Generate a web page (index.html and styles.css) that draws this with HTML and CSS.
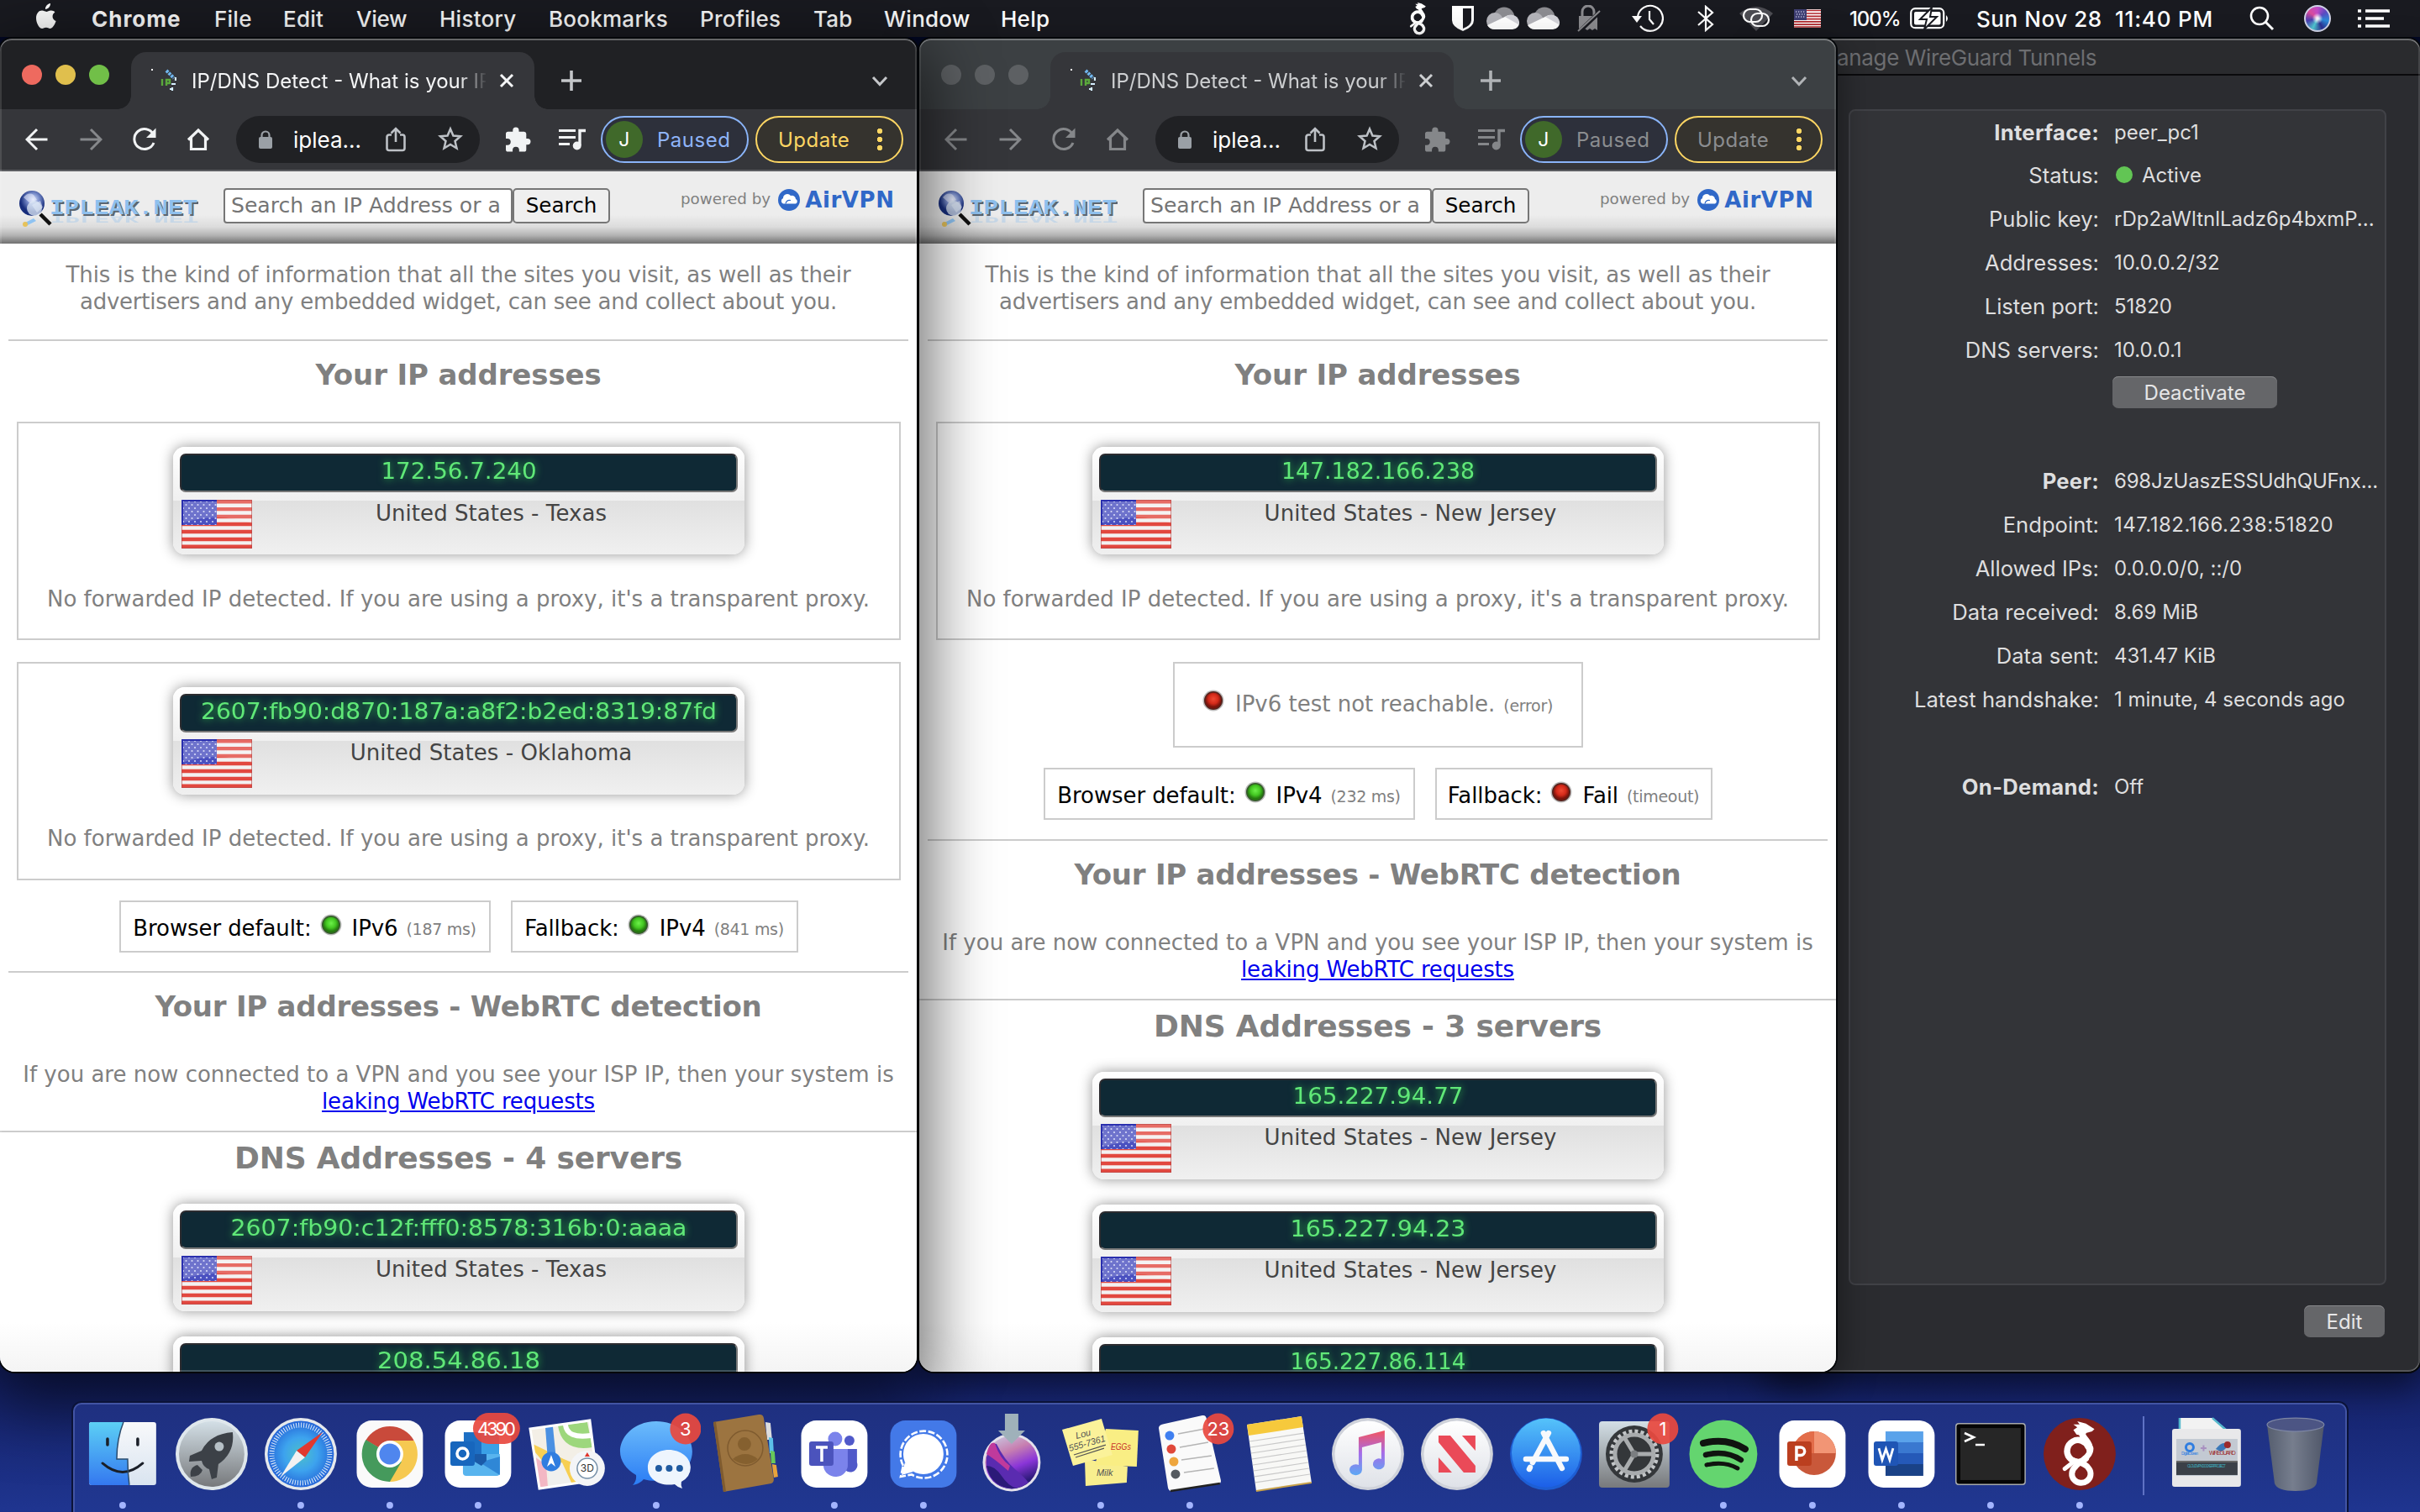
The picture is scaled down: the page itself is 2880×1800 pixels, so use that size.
FILE: index.html
```html
<!DOCTYPE html>
<html lang="en">
<head>
<meta charset="utf-8">
<title>Desktop</title>
<link rel="stylesheet" href="styles.css">
</head>
<body>
<svg class="defs" width="0" height="0" aria-hidden="true">
  <defs>
    <linearGradient id="gGray" x1="0" y1="0" x2="0" y2="1"><stop offset="0" stop-color="#d3dfe6"/><stop offset="1" stop-color="#77797c"/></linearGradient>
    <linearGradient id="gFinder" x1="0" y1="0" x2="0" y2="1"><stop offset="0" stop-color="#5ccff5"/><stop offset="1" stop-color="#3478f0"/></linearGradient>
    <linearGradient id="gFace" x1="0" y1="0" x2="0" y2="1"><stop offset="0" stop-color="#f8f9fb"/><stop offset="1" stop-color="#d9e4f0"/></linearGradient>
    <radialGradient id="gSafari"><stop offset="0" stop-color="#4cc0c8"/><stop offset=".5" stop-color="#3da3ee"/><stop offset="1" stop-color="#2566d8"/></radialGradient>
    <linearGradient id="gMsg" x1="0" y1="0" x2="0" y2="1"><stop offset="0" stop-color="#6cbcfb"/><stop offset="1" stop-color="#2a7cf5"/></linearGradient>
    <linearGradient id="gStore" x1="0" y1="0" x2="0" y2="1"><stop offset="0" stop-color="#55c3fa"/><stop offset="1" stop-color="#1c5fe8"/></linearGradient>
    <linearGradient id="gWhite" x1="0" y1="0" x2="0" y2="1"><stop offset="0" stop-color="#ffffff"/><stop offset="1" stop-color="#dfe2e8"/></linearGradient>
    <linearGradient id="gNote" x1="0" y1="0" x2="0" y2="1"><stop offset="0" stop-color="#f3555f"/><stop offset=".5" stop-color="#a66be8"/><stop offset="1" stop-color="#5ca8f4"/></linearGradient>
    <linearGradient id="gMont" x1="0" y1="0" x2=".4" y2="1"><stop offset="0" stop-color="#c9d4ea"/><stop offset=".4" stop-color="#c77fb0"/><stop offset=".7" stop-color="#8a35d8"/><stop offset="1" stop-color="#2a1a78"/></linearGradient>
    <linearGradient id="gTrash" x1="0" y1="0" x2="1" y2="0"><stop offset="0" stop-color="#5b626c"/><stop offset=".45" stop-color="#80868e"/><stop offset="1" stop-color="#555b66"/></linearGradient>
    <radialGradient id="gGreen" cx=".5" cy=".4"><stop offset="0" stop-color="#6df04a"/><stop offset=".6" stop-color="#43c722"/><stop offset="1" stop-color="#267a10"/></radialGradient>
    <radialGradient id="gRed" cx=".5" cy=".4"><stop offset="0" stop-color="#ef4a34"/><stop offset=".6" stop-color="#d42a1a"/><stop offset="1" stop-color="#7a140c"/></radialGradient>
    <radialGradient id="gGlobe" cx=".55" cy=".35"><stop offset="0" stop-color="#dfe6f8"/><stop offset=".45" stop-color="#7f93cf"/><stop offset="1" stop-color="#182e7c"/></radialGradient>
    <pattern id="stars" width="7" height="8" patternUnits="userSpaceOnUse"><rect width="7" height="8" fill="#4a50c0"/><circle cx="2" cy="2" r="1.1" fill="#cfd3f5"/><circle cx="5.5" cy="6" r="1.1" fill="#cfd3f5"/></pattern>

    <symbol id="flag" viewBox="0 0 84 58">
      <rect width="84" height="58" fill="#f3f1f1"/>
      <path d="M0 2.200h84M0 11.100h84M0 20h84M0 29h84M0 38h84M0 47h84M0 55.800h84" stroke="#e2483f" stroke-width="4.400"/>
      <rect width="42" height="30" fill="url(#stars)"/>
      <path d="M0 0H84V28Q42 14 0 28Z" fill="#fff" opacity=".2"/>
      <rect x=".5" y=".5" width="83" height="57" fill="none" stroke="#b04848" stroke-opacity=".6"/>
      <path d="M1 0V30M0 1H42" stroke="#2a2fae" stroke-width="2"/>
    </symbol>
    <symbol id="ledGreen" viewBox="0 0 26 32"><circle cx="13" cy="16" r="12.500" fill="#bbb"/><circle cx="13" cy="16" r="11" fill="#365a2c"/><circle cx="13" cy="16" r="9.500" fill="url(#gGreen)"/></symbol>
    <symbol id="ledRed" viewBox="0 0 26 32"><circle cx="13" cy="16" r="12.500" fill="#bbb"/><circle cx="13" cy="16" r="11" fill="#55241e"/><circle cx="13" cy="16" r="9.500" fill="url(#gRed)"/></symbol>
    <symbol id="cloudIcon" viewBox="0 0 40 28">
      <circle cx="21" cy="13" r="12.500" fill="#8c8c91"/><circle cx="10" cy="17" r="10" fill="#b4b4ba"/>
      <path d="M10 27a10 10 0 0 1-9-5L26 10l13 8a8 8 0 0 1-8 9z" fill="#fff"/>
      <path d="M26 10a10 10 0 0 1 13 8l-1 3-16-9z" fill="#d4d4da"/>
    </symbol>
    <symbol id="dragon" viewBox="-30 -43 60 86">
      <g fill="none" stroke="currentColor" stroke-linecap="round">
        <path d="M8 7A14 14 0 1 1 11-8" stroke-width="8"/>
        <path d="M-9 9C-2 12 8 12 12 20A12 11.500 0 1 1-6 18C-2 11 14 6 14-6" stroke-width="7.500"/>
        <path d="M13-4C14-16 2-18 3-28" stroke-width="8.500"/>
        <path d="M-10 13L-19 20" stroke-width="5.500"/>
      </g>
      <path d="M-8-30L-3-33-8-37 0-37-3-41 8-38 19-31 16-28 9-26 5-22-4-24Z" fill="currentColor"/>
    </symbol>

    <symbol id="iBack" viewBox="0 0 28 28"><path d="M26.500 14H3M14 2L2 14l12 12" fill="none" stroke="currentColor" stroke-width="3"/></symbol>
    <symbol id="iFwd" viewBox="0 0 28 28"><path d="M1.500 14H25M14 2l12 12-12 12" fill="none" stroke="currentColor" stroke-width="3"/></symbol>
    <symbol id="iReload" viewBox="0 0 28 28"><path d="M24.500 8A12 12 0 1 0 25 18" fill="none" stroke="currentColor" stroke-width="3"/><path d="M27.500 0.500V12H16Z" fill="currentColor"/></symbol>
    <symbol id="iHome" viewBox="0 0 28 28"><path d="M2 14.500L14 3l12 11.500M5.500 12v13.500h17V12" fill="none" stroke="currentColor" stroke-width="3.200"/></symbol>
    <symbol id="iLock" viewBox="0 0 18 22"><rect x="1" y="8" width="16" height="14" rx="2" fill="#9aa0a6"/><path d="M4.500 9V6a4.500 4.500 0 0 1 9 0v3" fill="none" stroke="#9aa0a6" stroke-width="2.200"/></symbol>
    <symbol id="iShare" viewBox="0 0 24 30"><path d="M7 9.500H4A2.500 2.500 0 0 0 1.500 12v13.500A2.500 2.500 0 0 0 4 28h16a2.500 2.500 0 0 0 2.500-2.500V12A2.500 2.500 0 0 0 20 9.500h-3M12 18V3M6.500 7.500L12 2l5.500 5.500" fill="none" stroke="currentColor" stroke-width="2.600"/></symbol>
    <symbol id="iStar" viewBox="0 0 30 30"><path d="M15 3.500l3.400 8 8.600.8-6.500 5.700 2 8.500L15 22l-7.500 4.500 2-8.500L3 12.300l8.600-.8z" fill="none" stroke="currentColor" stroke-width="2.500"/></symbol>
    <symbol id="iPuzzle" viewBox="0 0 29 29"><path d="M25 13.500h-1.500V8A2.600 2.600 0 0 0 21 5.500h-6V4a3.500 3.500 0 0 0-7 0v1.500H2.500A2.500 2.500 0 0 0 0 8v5.500h1.800a3.700 3.700 0 0 1 0 7.500H0v5A2.500 2.500 0 0 0 2.500 28.500h5.300v-1.800a3.700 3.700 0 0 1 7.500 0v1.800H21a2.500 2.500 0 0 0 2.500-2.500V20.500H25a3.500 3.500 0 0 0 0-7z" fill="currentColor"/></symbol>
    <symbol id="iQueue" viewBox="0 0 34 26"><path d="M1 2.500h20M1 10.500h20M1 18.500h13" stroke="currentColor" stroke-width="3.200"/><path d="M26 20V2.500h7" fill="none" stroke="currentColor" stroke-width="3.400"/><circle cx="22.700" cy="20.500" r="5" fill="currentColor"/></symbol>
    <symbol id="iX" viewBox="0 0 18 18"><path d="M2 2l14 14M16 2L2 16" stroke="currentColor" stroke-width="3"/></symbol>
    <symbol id="iPlus" viewBox="0 0 24 24"><path d="M12 0v24M0 12h24" stroke="currentColor" stroke-width="3.600"/></symbol>
    <symbol id="iChev" viewBox="0 0 20 14"><path d="M2 3l8 8.500L18 3" fill="none" stroke="currentColor" stroke-width="3"/></symbol>
    <symbol id="favicon" viewBox="0 0 30 28">
      <rect width="2" height="2" fill="#fff"/>
      <path d="M13 12v8M18 20v-7h4v4h-4" fill="none" stroke="#5aa83c" stroke-width="2.400"/>
      <path d="M18 2l5 5 4 4" fill="none" stroke="#6fb6ee" stroke-width="4" stroke-dasharray="3 1"/>
      <path d="M29 10v4M24 18h5M22 24h4M25 26v-4" stroke="#d6efff" stroke-width="2.200"/>
    </symbol>
    <symbol id="logo" viewBox="0 0 214 46">
      <circle cx="16" cy="15" r="15" fill="url(#gGlobe)"/><path d="M6 8q6-7 12-3l4 6-8 4zM16 17l10-5 3 8-7 6z" fill="#eef2ff" opacity=".55"/>
      <circle cx="19" cy="21" r="9" fill="#dfe9f6" opacity=".75"/><path d="M26 28l12 12" stroke="#111" stroke-width="4.500"/><path d="M6 39l12-6 3 3-12 6z" fill="#8fc3f2"/><circle cx="8" cy="40" r="3" fill="#e6c25a"/>
      <text class="logo-text logo-reflect" transform="translate(38 29) scale(1 -.5)" x="0" y="0" textLength="176" lengthAdjust="spacingAndGlyphs">IPLEAK.NET</text>
      <text class="logo-text logo-shade" x="39" y="29.500" textLength="176" lengthAdjust="spacingAndGlyphs">IPLEAK.NET</text>
      <text class="logo-text" x="37" y="28" textLength="176" lengthAdjust="spacingAndGlyphs">IPLEAK.NET</text>
    </symbol>
    <symbol id="airvpn" viewBox="0 0 26 26"><circle cx="13" cy="13" r="13" fill="#3068c8"/><path d="M6 17.500a3.500 3.500 0 0 1 0-6.500 5 5 0 0 1 9-3 4.500 4.500 0 0 1 6 4 3 3 0 0 1 0 5.500z" fill="#fff"/><path d="M9 17.500q1-5 6-4" fill="none" stroke="#3068c8" stroke-width="1.200"/></symbol>
  </defs>
</svg>

<header class="menubar">
  <span class="m m-apple"><svg width="26" height="32" viewBox="0 0 26 32"><path d="M18 0c.3 3.300-2.700 7-6 7C11.600 3.600 14.900.4 18 0zM23.400 10.400c-4.300 2.800-3.500 8.800 1.200 10.700C23 26 20.200 30 17.600 30c-2 0-2.600-1.200-4.700-1.200-2.200 0-2.900 1.200-4.700 1.200C4.800 30 1 23.500 1 17.500 1 12 4.300 8.600 8 8.600c2.200 0 3.700 1.300 5.200 1.300 1.400 0 3.100-1.500 5.700-1.400 1.800 0 3.400.7 4.500 1.900z" fill="#fff"/></svg></span>
  <span class="m m-app">Chrome</span><span class="m m-file">File</span><span class="m m-edit">Edit</span><span class="m m-view">View</span><span class="m m-history">History</span><span class="m m-bookmarks">Bookmarks</span><span class="m m-profiles">Profiles</span><span class="m m-tab">Tab</span><span class="m m-window">Window</span><span class="m m-help">Help</span>
  <span class="ic w54"><svg width="28" height="40"><use href="#dragon"/></svg></span>
  <span class="ic w52"><svg width="26" height="30" viewBox="0 0 26 30"><path d="M0 0h26v17q0 8-13 13Q0 25 0 17z" fill="#fff"/><path d="M13 3h10v14q0 6-10 10z" fill="#191a20"/></svg></span>
  <span class="ic w44"><svg width="40" height="28"><use href="#cloudIcon"/></svg></span>
  <span class="ic w52"><svg width="40" height="28"><use href="#cloudIcon"/></svg></span>
  <span class="ic w56"><svg width="28" height="32" viewBox="0 0 28 32"><path d="M2 13h22v17l-3-2-3 2-3-2-3 2-3-2-3 2-4-2z" fill="#8a8a8e"/><path d="M6 14V8a7 7 0 0 1 14 0v6" fill="none" stroke="#8a8a8e" stroke-width="3"/><path d="M3 31L27 8" stroke="#191a20" stroke-width="5"/><path d="M1 31L27 7" stroke="#8a8a8e" stroke-width="2"/></svg></span>
  <span class="ic w84"><svg width="38" height="34" viewBox="0 0 38 34"><path d="M7 15a15 15 0 1 1 3 11" fill="none" stroke="#fff" stroke-width="2.200"/><path d="M0 14h12l-6 8z" fill="#fff"/><path d="M21 8v10l5 6" fill="none" stroke="#fff" stroke-width="2.200"/></svg></span>
  <span class="ic w54"><svg width="20" height="32" viewBox="0 0 20 32"><path d="M1 8l17 15-8 7V2l8 7L1 24" fill="none" stroke="#fff" stroke-width="2.200"/></svg></span>
  <span class="ic w66"><svg width="40" height="30" viewBox="0 0 40 30"><path d="M0 9Q20-7 40 9L20 30z" fill="#4c4c52"/><g fill="none" stroke="#fff" stroke-width="2.200"><rect x="5" y="4" width="22" height="15" rx="7.500"/><rect x="14" y="9" width="21" height="15" rx="7.500"/></g></svg></span>
  <span class="ic w56"><svg width="32" height="22" viewBox="0 0 32 22"><rect width="32" height="22" fill="#fff"/><path d="M0 1.500h32M0 5h32M0 8.300h32M0 11.600h32M0 14.900h32M0 18.200h32M0 21h32" stroke="#b3282d" stroke-width="1.700"/><rect width="15" height="13" fill="#3f3f73"/><path d="M2 3h12M3 6h10M2 9h12" stroke="#b9b9d8" stroke-width="1.300" stroke-dasharray="1.300 1.700"/></svg></span>
  <span class="m m-pct">100%</span>
  <span class="ic w72"><svg width="48" height="26" viewBox="0 0 48 26"><rect x="1.200" y="1.200" width="39" height="23" rx="5" fill="none" stroke="#fff" stroke-width="2.200"/><path d="M43 9q4 4 0 8z" fill="#fff"/><rect x="5" y="5" width="31.500" height="15.500" rx="2" fill="#fff"/><path d="M26 0L12 14h8l-3 12L32 11h-8z" fill="#fff" stroke="#191a20" stroke-width="2"/></svg></span>
  <span class="m m-date">Sun Nov 28</span><span class="m m-time">11:40 PM</span>
  <span class="ic w66"><svg width="30" height="30" viewBox="0 0 30 30"><circle cx="12" cy="12" r="10" fill="none" stroke="#fff" stroke-width="2.600"/><path d="M19 19l9 9" stroke="#fff" stroke-width="3"/></svg></span>
  <span class="ic siri"><i></i></span>
  <span class="ic w68"><svg width="38" height="22" viewBox="0 0 38 22"><path d="M0 2h4M0 11h4M0 20h4M9 2h29M9 11h22M9 20h29" stroke="#fff" stroke-width="3.600"/></svg></span>
</header>

<main class="desktop">
  <section class="win wg">
    <div class="wg-title">Manage WireGuard Tunnels</div>
    <div class="wg-group">
      <b>Interface:</b><span>peer_pc1</span>
      <label>Status:</label><span class="wg-status"><i></i>Active</span>
      <label>Public key:</label><span>rDp2aWltnlLadz6p4bxmP...</span>
      <label>Addresses:</label><span>10.0.0.2/32</span>
      <label>Listen port:</label><span>51820</span>
      <label>DNS servers:</label><span>10.0.0.1</span>
      <label></label><span><button class="mac-btn deact">Deactivate</button></span>
      <label></label><span></span>
      <b>Peer:</b><span class="tight">698JzUaszESSUdhQUFnx...</span>
      <label>Endpoint:</label><span class="wide">147.182.166.238:51820</span>
      <label>Allowed IPs:</label><span>0.0.0.0/0, ::/0</span>
      <label>Data received:</label><span>8.69 MiB</span>
      <label>Data sent:</label><span>431.47 KiB</span>
      <label>Latest handshake:</label><span>1 minute, 4 seconds ago</span>
      <label></label><span></span>
      <b>On-Demand:</b><span>Off</span>
    </div>
    <div class="wg-foot"><button class="mac-btn edit">Edit</button></div>
  </section>

  <section class="win chrome right inactive">
    <div class="strip">
      <div class="lights"><i></i><i></i><i></i></div>
      <div class="tab"><svg width="30" height="28"><use href="#favicon"/></svg><span class="tab-title">IP/DNS Detect - What is your IP</span><svg class="x" width="18" height="18"><use href="#iX"/></svg></div>
      <svg class="plus" width="24" height="24"><use href="#iPlus"/></svg>
      <svg class="chev" width="20" height="14"><use href="#iChev"/></svg>
    </div>
    <div class="toolbar">
      <svg width="28" height="28"><use href="#iBack"/></svg><svg width="28" height="28"><use href="#iFwd"/></svg><svg width="28" height="28"><use href="#iReload"/></svg><svg width="28" height="28"><use href="#iHome"/></svg>
      <div class="omni"><svg width="18" height="22"><use href="#iLock"/></svg><span>iplea...</span><svg width="24" height="30"><use href="#iShare"/></svg><svg class="star" width="30" height="30"><use href="#iStar"/></svg></div>
      <svg class="puz" width="30" height="30"><use href="#iPuzzle"/></svg><svg class="queue" width="34" height="26"><use href="#iQueue"/></svg>
      <div class="pill paused"><b>J</b><span>Paused</span></div>
      <div class="pill update"><span>Update</span><i></i></div>
    </div>
    <div class="page">
      <div class="site-head">
        <svg class="logo" width="214" height="46"><use href="#logo"/></svg>
        <div class="query">Search an IP Address or a</div><div class="go">Search</div>
        <div class="powered">powered by</div><svg class="air" width="26" height="26"><use href="#airvpn"/></svg><div class="air-name">AirVPN</div>
      </div>
      <p class="intro">This is the kind of information that all the sites you visit, as well as their<br><span class="l2">advertisers and any embedded widget, can see and collect about you.</span></p>
      <hr>
      <h2>Your IP addresses</h2>
      <div class="box">
        <div class="card"><div class="lcd"><svg width="660" height="42"><text x="330" y="27.500" text-anchor="middle" textLength="230" lengthAdjust="spacingAndGlyphs">147.182.166.238</text></svg></div><div class="where"><svg width="84" height="58"><use href="#flag"/></svg><span>United States - New Jersey</span></div></div>
        <p>No forwarded IP detected. If you are using a proxy, it's a transparent proxy.</p>
      </div>
      <div class="box failed"><svg width="26" height="32"><use href="#ledRed"/></svg><span>IPv6 test not reachable.</span><small>(error)</small></div>
      <div class="stats">
        <div class="stat s442"><span>Browser default:</span><svg width="26" height="32"><use href="#ledGreen"/></svg><span>IPv4</span><small>(232 ms)</small></div>
        <div class="stat s330"><span>Fallback:</span><svg width="26" height="32"><use href="#ledRed"/></svg><span>Fail</span><small>(timeout)</small></div>
      </div>
      <hr class="after-stats">
      <h2 class="tight">Your IP addresses - WebRTC detection</h2>
      <p class="rtc">If you are now connected to a VPN and you see your ISP IP, then your system is<br><a href="#">leaking WebRTC requests</a></p>
      <hr class="full">
      <h1>DNS Addresses - 3 servers</h1>
      <div class="cards">
        <div class="card"><div class="lcd"><svg width="660" height="42"><text x="330" y="27.500" text-anchor="middle" textLength="203" lengthAdjust="spacingAndGlyphs">165.227.94.77</text></svg></div><div class="where"><svg width="84" height="58"><use href="#flag"/></svg><span>United States - New Jersey</span></div></div>
        <div class="card"><div class="lcd"><svg width="660" height="42"><text x="330" y="27.500" text-anchor="middle" textLength="209" lengthAdjust="spacingAndGlyphs">165.227.94.23</text></svg></div><div class="where"><svg width="84" height="58"><use href="#flag"/></svg><span>United States - New Jersey</span></div></div>
        <div class="card"><div class="lcd"><svg width="660" height="42"><text x="330" y="27.500" text-anchor="middle" textLength="209" lengthAdjust="spacingAndGlyphs">165.227.86.114</text></svg></div></div>
      </div>
    </div>
  </section>

  <section class="win chrome left">
    <div class="strip">
      <div class="lights"><i></i><i></i><i></i></div>
      <div class="tab"><svg width="30" height="28"><use href="#favicon"/></svg><span class="tab-title">IP/DNS Detect - What is your IP</span><svg class="x" width="18" height="18"><use href="#iX"/></svg></div>
      <svg class="plus" width="24" height="24"><use href="#iPlus"/></svg>
      <svg class="chev" width="20" height="14"><use href="#iChev"/></svg>
    </div>
    <div class="toolbar">
      <svg width="28" height="28"><use href="#iBack"/></svg><svg class="dim" width="28" height="28"><use href="#iFwd"/></svg><svg width="28" height="28"><use href="#iReload"/></svg><svg width="28" height="28"><use href="#iHome"/></svg>
      <div class="omni"><svg width="18" height="22"><use href="#iLock"/></svg><span>iplea...</span><svg width="24" height="30"><use href="#iShare"/></svg><svg class="star" width="30" height="30"><use href="#iStar"/></svg></div>
      <svg class="puz" width="30" height="30"><use href="#iPuzzle"/></svg><svg class="queue" width="34" height="26"><use href="#iQueue"/></svg>
      <div class="pill paused"><b>J</b><span>Paused</span></div>
      <div class="pill update"><span>Update</span><i></i></div>
    </div>
    <div class="page">
      <div class="site-head">
        <svg class="logo" width="214" height="46"><use href="#logo"/></svg>
        <div class="query">Search an IP Address or a</div><div class="go">Search</div>
        <div class="powered">powered by</div><svg class="air" width="26" height="26"><use href="#airvpn"/></svg><div class="air-name">AirVPN</div>
      </div>
      <p class="intro">This is the kind of information that all the sites you visit, as well as their<br><span class="l2">advertisers and any embedded widget, can see and collect about you.</span></p>
      <hr>
      <h2>Your IP addresses</h2>
      <div class="box">
        <div class="card"><div class="lcd"><svg width="660" height="42"><text x="330" y="27.500" text-anchor="middle" textLength="185" lengthAdjust="spacingAndGlyphs">172.56.7.240</text></svg></div><div class="where"><svg width="84" height="58"><use href="#flag"/></svg><span>United States - Texas</span></div></div>
        <p>No forwarded IP detected. If you are using a proxy, it's a transparent proxy.</p>
      </div>
      <div class="box">
        <div class="card"><div class="lcd"><svg width="660" height="42"><text x="330" y="27.500" text-anchor="middle" textLength="614" lengthAdjust="spacingAndGlyphs">2607:fb90:d870:187a:a8f2:b2ed:8319:87fd</text></svg></div><div class="where"><svg width="84" height="58"><use href="#flag"/></svg><span>United States - Oklahoma</span></div></div>
        <p>No forwarded IP detected. If you are using a proxy, it's a transparent proxy.</p>
      </div>
      <div class="stats">
        <div class="stat s442"><span>Browser default:</span><svg width="26" height="32"><use href="#ledGreen"/></svg><span>IPv6</span><small>(187 ms)</small></div>
        <div class="stat s342"><span>Fallback:</span><svg width="26" height="32"><use href="#ledGreen"/></svg><span>IPv4</span><small>(841 ms)</small></div>
      </div>
      <hr class="after-stats">
      <h2 class="tight">Your IP addresses - WebRTC detection</h2>
      <p class="rtc">If you are now connected to a VPN and you see your ISP IP, then your system is<br><a href="#">leaking WebRTC requests</a></p>
      <hr class="full">
      <h1>DNS Addresses - 4 servers</h1>
      <div class="cards">
        <div class="card"><div class="lcd"><svg width="660" height="42"><text x="330" y="27.500" text-anchor="middle" textLength="543" lengthAdjust="spacingAndGlyphs">2607:fb90:c12f:fff0:8578:316b:0:aaaa</text></svg></div><div class="where"><svg width="84" height="58"><use href="#flag"/></svg><span>United States - Texas</span></div></div>
        <div class="card"><div class="lcd"><svg width="660" height="42"><text x="330" y="27.500" text-anchor="middle" textLength="194" lengthAdjust="spacingAndGlyphs">208.54.86.18</text></svg></div></div>
      </div>
    </div>
  </section>

  <nav class="dock">
    <!-- Finder -->
    <svg class="app" viewBox="-53 -61 106 130"><rect x="-40" y="-38" width="80" height="75" rx="3" fill="url(#gFace)"/><path d="M1-38H-37a3 3 0 0 0-3 3V34a3 3 0 0 0 3 3H8Q6 22 6 6H-7Q-7-18 1-38Z" fill="url(#gFinder)"/><path d="M-18-18v7M18-18v7" stroke="#1a1f28" stroke-width="3.500" stroke-linecap="round"/><path d="M-24 11Q0 32 24 11" fill="none" stroke="#1a1f28" stroke-width="3" stroke-linecap="round"/><path d="M1-38Q-7-18-7 6H6Q6 22 8 37" fill="none" stroke="#2b4c6e" stroke-width="1.500"/><circle cy="61" r="4" class="run"/></svg>
    <!-- Launchpad -->
    <svg class="app" viewBox="-53 -61 106 130"><circle r="43" fill="#dfe7ec"/><circle r="39" fill="url(#gGray)"/><path d="M25-26Q-2-24-12-4L-26 2-27 9-12 8Q-10 16-3 18L0 30 6 28 8 12Q28-2 25-26Z" fill="#3c4147"/><circle cx="9" cy="-9" r="5.500" fill="#b6c0c6"/><path d="M-17 13q-10 3-8 14 12 0 14-8z" fill="#3c4147"/></svg>
    <!-- Safari -->
    <svg class="app" viewBox="-53 -61 106 130"><circle r="43" fill="#e6e9ec"/><circle r="39.500" fill="url(#gSafari)"/><circle r="34.500" fill="none" stroke="#fff" stroke-width="6" stroke-dasharray="1 2.010" opacity=".85"/><path d="M26-26L-5-4 5 4Z" fill="#e2382e"/><path d="M-24 27L-5-4 5 4Z" fill="#f2f2f2"/><circle cy="61" r="4" class="run"/></svg>
    <!-- Chrome -->
    <svg class="app" viewBox="-53 -61 106 130"><rect x="-39.500" y="-40" width="79" height="80" rx="18" fill="#fafafa"/><path d="M0 0L-28.600-16.500A33 33 0 0 1 28.600-16.500Z" fill="#c94a3b"/><path d="M0 0L0-16H28.900A33 33 0 0 1-1 33L14 8Z" fill="#f6c951"/><path d="M0 0L-28.600-17A33 33 0 0 0 0 33L14 9Z" fill="#459a5c"/><circle r="16" fill="#fff"/><circle r="12.500" fill="#4f86ee"/><circle cy="61" r="4" class="run"/></svg>
    <!-- Outlook -->
    <svg class="app" viewBox="-53 -61 106 130"><rect x="-39.500" y="-40" width="79" height="80" rx="18" fill="#fff"/><rect x="-17" y="-26" width="42" height="50" fill="#1d6fc4"/><path d="M4-26h21V0H4z" fill="#3aa0e6"/><path d="M-18 0H26V22a4 4 0 0 1-4 4H-14a4 4 0 0 1-4-4z" fill="#58b4ee"/><path d="M26 3v22L2 10z" fill="#2f87d6"/><path d="M-4 0h14v8L4 14-6 8z" fill="#1a5aa8"/><rect x="-33" y="-15" width="29" height="29" rx="3" fill="#1766bd"/><circle cx="-18.500" cy="-.5" r="6.500" fill="none" stroke="#fff" stroke-width="3.500"/><rect x="-6" y="-49" width="56" height="37" rx="18.500" class="badge"/><text x="22" y="-22.500" class="badge-t" textLength="46">4390</text><circle cy="61" r="4" class="run"/></svg>
    <!-- Maps -->
    <svg class="app" viewBox="-53 -61 106 130"><path d="M-44-30L27-40 36 31-33 41Z" fill="#f3efe6"/><path d="M-11-34L24-38 30-8Q-6-2-11-34Z" fill="#9dd77c"/><path d="M-2-35Q0-18 28-22" fill="none" stroke="#fff" stroke-width="6"/><path d="M-41-12L-4 6 34 22 35 30-6 36-38-2Z" fill="#f7cf52"/><path d="M-39 3l14 10 2 26-10 1z" fill="#f3b7c4"/><path d="M-22 40V14l16-4 12 26z" fill="#f0f0ee"/><path d="M-26-32l9-1 4 40h-10z" fill="#4a90e2"/><circle cx="-19" cy="9" r="11.500" fill="#2f7de0"/><path d="M-19 1l5 14-5-4-5 4z" fill="#fff"/><path d="M-44-30L27-40 36 31-33 41Z" fill="none" stroke="#fff" stroke-width="3"/><circle cx="24" cy="17" r="21" fill="#f4f5f7"/><circle cx="24" cy="17" r="12" fill="#fff" stroke="#7690a8" stroke-width="1.500"/><path d="M24-2l3 5h-6z" fill="#e0352b"/><text x="24" y="21" class="small-t">3D</text></svg>
    <!-- Messages -->
    <svg class="app" viewBox="-53 -61 106 130"><path d="M0-39C24-39 43-23 43-3S24 32 0 32Q-9 32-15 30-20 36-28 37-23 32-24 25C-36 18-43 8-43-3-43-23-24-39 0-39Z" fill="url(#gMsg)"/><path d="M15-5C29-5 41 4 41 16Q41 27 30 33 29 37 31 41 26 40 22 36C4 39-10 30-10 16-10 4 1-5 15-5Z" fill="#eef5fd"/><g fill="#1f5aa0"><circle cx="3" cy="17" r="4"/><circle cx="15.500" cy="17" r="4"/><circle cx="28" cy="17" r="4"/></g><circle cx="35" cy="-30" r="18.500" class="badge"/><text x="35" y="-22.500" class="badge-t">3</text><circle cy="61" r="4" class="run"/></svg>
    <!-- Contacts -->
    <svg class="app" viewBox="-53 -61 106 130"><path d="M24-38l6 1 2 20h-6z" fill="#ddd"/><path d="M28-20l5 1 1 18h-5z" fill="#5cc0e8"/><path d="M30-4l5 1 1 14h-5z" fill="#68c95a"/><path d="M32 12l5 1 2 14-5 1z" fill="#e8a33c"/><path d="M-38-38L16-47q5-1 6 4L34 30q0 4-3 5L-26 45Z" fill="#9c7440"/><path d="M-38-38L-35-38.500-23 44.500-26 45Z" fill="#7f5b2f"/><circle cx="0" cy="-7" r="21" fill="none" stroke="#7f5b2f" stroke-width="1.500"/><circle cx="-1" cy="-12" r="8" fill="#85602f"/><path d="M-15 6Q0-6 15 6 2 18-15 6Z" fill="#85602f"/></svg>
    <!-- Teams -->
    <svg class="app" viewBox="-53 -61 106 130"><rect x="-39.500" y="-40" width="79" height="80" rx="18" fill="#fff"/><circle cx="18" cy="-16" r="6" fill="#5059c9"/><path d="M10-6H27V10a8 8 0 0 1-16 6z" fill="#5059c9"/><circle cx="1" cy="-18" r="8.500" fill="#7b83eb"/><path d="M-14-6H16V12a14.500 14 0 0 1-29 2z" fill="#7b83eb"/><rect x="-30" y="-15" width="29" height="29" rx="3" fill="#4b53bc"/><path d="M-22-8h14M-15-8V9" stroke="#fff" stroke-width="3.500"/><circle cy="61" r="4" class="run"/></svg>
    <!-- Signal -->
    <svg class="app" viewBox="-53 -61 106 130"><rect x="-39.500" y="-40" width="79" height="80" rx="18" fill="#4379e8"/><circle r="24" fill="#fff"/><path d="M-22 10L-26 25-12 21Z" fill="#fff"/><path d="M-24 14A28 28 0 1 1-14 24.500L-27 27Z" fill="none" stroke="#fff" stroke-width="2.600" stroke-dasharray="8 2.500"/><circle cy="61" r="4" class="run"/></svg>
    <!-- macOS installer -->
    <svg class="app" viewBox="-53 -61 106 130"><circle cy="10" r="34.500" fill="#e4e2ec"/><circle cy="10" r="31.500" fill="url(#gMont)"/><path d="M-30 4Q-24-14-18-12-8 8 4 18T20 34Q4 46-14 38-32 28-30 4Z" fill="#5a2bb0"/><path d="M-30 14Q-20 14-12 26T6 41Q-24 42-30 14Z" fill="#2b1a78"/><path d="M-30 0Q-26-16-20-13-14 6-2 14L-4 20Q-20 6-30 0Z" fill="#c03a9c"/><path d="M-8-48H8V-28H16L0-12-16-28H-8Z" fill="#9fb1ba"/></svg>
    <!-- Stickies -->
    <svg class="app" viewBox="-53 -61 106 130"><path d="M-19 6L32 15 31 34-18 38Z" fill="#f8ee8e"/><path d="M6-30L45-28 43 15-7 13Z" fill="#f9ee84"/><path d="M-46-29L1-42 14 1-33 14Z" fill="#fbf29a"/><g class="hand"><text x="-29" y="-18" transform="rotate(-14 -29 -18)">Lou</text><text x="-37" y="-3" transform="rotate(-16 -37 -3)" textLength="45" lengthAdjust="spacingAndGlyphs">555-7361</text><text x="12" y="-5" class="redhand" textLength="24" lengthAdjust="spacingAndGlyphs">EGGs</text><text x="-5" y="26">Milk</text></g><path d="M-32 1L6-11M-30 4L4-7" stroke="#555" stroke-width="1.300"/><circle cy="61" r="4" class="run"/></svg>
    <!-- Reminders -->
    <svg class="app" viewBox="-53 -61 106 130"><path d="M-30-36L15-46q4-1 5 4L37 31q1 4-4 5L-20 44q-5 1-6-4L-37-31q0-4 7-5Z" fill="#fafafa"/><path d="M-23 44L36 35" stroke="#222" stroke-width="2.500"/><g><circle cx="-24" cy="-22" r="5.500" fill="#3f7ff0"/><circle cx="-22" cy="-6" r="5.500" fill="#e0483a"/><circle cx="-19" cy="9" r="5.500" fill="#eea63e"/><circle cx="-17" cy="24" r="5.500" fill="#555a60"/></g><path d="M-14-24L18-30M-12-8L22-14M-10 7L26 2M-7 22L29 17" stroke="#b5b5b5" stroke-width="1.500"/><circle cx="34" cy="-30" r="18.500" class="badge"/><text x="34" y="-22.500" class="badge-t">23</text><circle cy="61" r="4" class="run"/></svg>
    <!-- Notes -->
    <svg class="app" viewBox="-53 -61 106 130"><path d="M-38-35L27-45 39 34-27 44Z" fill="#f8f8f6"/><path d="M-38-35L27-45 29-32-36-22Z" fill="#f6c93c"/><path d="M-35-15L30-25M-34-8L31-18M-33-1L32-11M-32 6L33-4M-31 13L34 3M-30 20L35 10M-29 27L36 17M-28 34L37 24" stroke="#c9c9c9" stroke-width="1.200"/><path d="M-27 44L39 34" stroke="#c8a24a" stroke-width="2"/></svg>
    <!-- Music -->
    <svg class="app" viewBox="-53 -61 106 130"><circle r="43" fill="#cfd2da"/><circle r="39.500" fill="url(#gWhite)"/><path d="M-11-20L20-28V12a7 6.500 0 1 1-4-6V-14L-7-8V19a7.500 6.500 0 1 1-4-6Z" fill="url(#gNote)"/></svg>
    <!-- News -->
    <svg class="app" viewBox="-53 -61 106 130"><circle r="43" fill="#cfd2da"/><circle r="39.500" fill="url(#gWhite)"/><path d="M-22-22H-8L22 14V22H8L-22-14ZM6-22H22V-4ZM-22 4V22H-6Z" fill="#ea4a58"/></svg>
    <!-- App Store -->
    <svg class="app" viewBox="-53 -61 106 130"><circle r="43" fill="#1d5ed4"/><circle cy="-1.500" r="41" fill="url(#gStore)"/><g stroke="#f7f9fc" stroke-width="6.500" stroke-linecap="round"><path d="M-3-25L19 17M3-25L-16 10M-24 6H24M-19 16l-1 2"/></g></svg>
    <!-- System Preferences -->
    <svg class="app" viewBox="-53 -61 106 130"><rect x="-42" y="-39" width="84" height="79" rx="4" fill="url(#gGray)"/><circle r="34" fill="#34373a"/><circle r="27" fill="none" stroke="#c2c5c7" stroke-width="5" stroke-dasharray="4 3.070"/><circle r="23" fill="none" stroke="#a9acae" stroke-width="5"/><path d="M0 0L23 0M0 0L-12 20M0 0L-12-20" stroke="#a9acae" stroke-width="5"/><circle r="4.500" fill="#7b7e81"/><circle cx="34" cy="-30" r="18.500" class="badge"/><text x="34" y="-22.500" class="badge-t">1</text></svg>
    <!-- Spotify -->
    <svg class="app" viewBox="-53 -61 106 130"><circle r="40.500" fill="#64d56f"/><g fill="none" stroke="#101410" stroke-linecap="round"><path d="M-24-13Q4-20 26-6" stroke-width="8"/><path d="M-21 1Q3-5 21 7" stroke-width="6.500"/><path d="M-20 13Q1 8 17 17" stroke-width="5"/></g><circle cy="61" r="4" class="run"/></svg>
    <!-- PowerPoint -->
    <svg class="app" viewBox="-53 -61 106 130"><rect x="-39.500" y="-40" width="79" height="80" rx="18" fill="#fff"/><circle cx="2" cy="-1" r="26" fill="#c9583a"/><path d="M2-27A26 26 0 0 1 28-1H2Z" fill="#f29575"/><path d="M2-27V-1H-24A26 26 0 0 1 2-27Z" fill="#e36d4a"/><rect x="-30" y="-15" width="29" height="29" rx="3" fill="#bb3f1f"/><path d="M-19 8V-8h5a4.500 4.500 0 0 1 0 9.500h-5" fill="none" stroke="#fff" stroke-width="3.500"/><circle cy="61" r="4" class="run"/></svg>
    <!-- Word -->
    <svg class="app" viewBox="-53 -61 106 130"><rect x="-39.500" y="-40" width="79" height="80" rx="18" fill="#fff"/><rect x="-19" y="-27" width="45" height="14" fill="#5aa2ea"/><rect x="-19" y="-14" width="45" height="13" fill="#3a78d0"/><rect x="-19" y="-1" width="45" height="13" fill="#2559b8"/><rect x="-19" y="12" width="45" height="14" fill="#1a4287"/><rect x="-33" y="-15" width="29" height="29" rx="3" fill="#1f55b5"/><path d="M-27-7l4 14 4.500-13 4.500 13 4-14" fill="none" stroke="#fff" stroke-width="2.800"/><circle cy="61" r="4" class="run"/></svg>
    <!-- Terminal -->
    <svg class="app" viewBox="-53 -61 106 130"><rect x="-42" y="-37" width="84" height="74" rx="4" fill="#a6a9ac"/><rect x="-40.500" y="-35.500" width="81" height="71" rx="3" fill="#050505"/><rect x="-36" y="-31" width="72" height="62" fill="#262626"/><path d="M-31-25l11 5-11 5M-18-11h11" fill="none" stroke="#fff" stroke-width="2.600"/><circle cy="61" r="4" class="run"/></svg>
    <!-- WireGuard -->
    <svg class="app drag" viewBox="-53 -61 106 130"><circle r="43" fill="#80201c"/><use href="#dragon" x="-30" y="-41" width="60" height="80"/><circle cy="61" r="4" class="run"/></svg>
    <i class="sep"></i>
    <!-- Document stack -->
    <svg class="app" viewBox="-53 -61 106 130"><path d="M-32-43H7l16 14V0H-32z" fill="#f2f2f2"/><path d="M-32-43v18M7-43l16 14" stroke="#55b8cc" stroke-width="2.500"/><rect x="-41" y="-30" width="82" height="69" rx="3" fill="#e8e8ea"/><rect x="-36" y="-18" width="73" height="44" fill="#c3c9d2"/><rect x="-36" y="9" width="73" height="16" fill="#3b4048"/><rect x="-36" y="8" width="73" height="2" fill="#666"/><circle cx="-20" cy="-8" r="4.500" fill="none" stroke="#2f7de0" stroke-width="3"/><path d="M-7-7h7M-3.500-10.500v7" stroke="#a890c0" stroke-width="2"/><path d="M11-6q8-10 12-6 3 6-6 9z" fill="#3a78b8"/><circle cx="25" cy="-11" r="4" fill="#9c2a2a"/><text x="-20" y="1" class="tiny" textLength="20">DigitalOcean</text><text x="19" y="1" class="tiny redhand" textLength="32">WIREGUARD</text><text x="0" y="16" class="tiny teal" textLength="46">CLOUD VPN DOCKER PROJECT</text></svg>
    <!-- Trash -->
    <svg class="app" viewBox="-53 -61 106 130"><path d="M-34-35L-25 35Q-22 44 0 44T25 35L34-35Z" fill="url(#gTrash)" opacity=".9"/><ellipse cy="-35" rx="34" ry="8" fill="#4c5584" stroke="#7d86a4" stroke-width="1.200"/></svg>
  </nav>
</main>
</body>
</html>
```
FILE: styles.css
```css
* { box-sizing: border-box; }
body {
  margin: 0;
  width: 2880px;
  height: 1800px;
  overflow: hidden;
  background: linear-gradient(#030823 0, #0b1440 1500px, #15226a 1650px, #1f3590 1800px);
  font-family: Inter, "Liberation Sans", sans-serif;
}
.defs { position: absolute; }
svg { display: block; flex: none; }
p, h1, h2 { margin: 0; }

/* menu bar */
.menubar {
  height: 44px;
  padding-left: 42px;
  display: flex;
  align-items: center;
  background: #191a20;
  color: #fff;
  font-weight: 500;
  font-size: 26px;
  letter-spacing: .25px;
  white-space: nowrap;
}
.m { flex: none; padding-top: 0; }
.m-apple { width: 67px; padding: 0 0 4px; }
.m-app { width: 146px; font-weight: 700; letter-spacing: 1px; }
.m-file { width: 82px; }
.m-edit { width: 87px; }
.m-view { width: 99px; letter-spacing: -.3px; }
.m-history { width: 130px; }
.m-bookmarks { width: 180px; }
.m-profiles { width: 135px; }
.m-tab { width: 84px; }
.m-window { width: 139px; }
.m-help { width: 470px; }
.m-pct { width: 60px; margin-left: 22px; font-size: 24px; letter-spacing: -1.100px; }
.m-date { width: 165px; margin-left: 19px; letter-spacing: .55px; }
.m-time { width: 142px; letter-spacing: .8px; }
.ic { display: flex; justify-content: center; align-items: center; flex: none; }
.w44 { width: 44px; }
.w52 { width: 52px; }
.w54 { width: 54px; }
.w56 { width: 56px; }
.w66 { width: 66px; }
.w68 { width: 68px; }
.w72 { width: 72px; }
.w84 { width: 84px; }
.siri { width: 66px; }
.siri i {
  width: 32px;
  height: 32px;
  border-radius: 50%;
  border: 2px solid #cfd2e6;
  background: radial-gradient(circle, rgba(255,255,255,.9) 0 6%, transparent 32%), conic-gradient(#c04ac8, #5b4ac0, #2a8ad8, #2a2f90, #4fc6d0, #4a3fb0, #d84a9a, #c04ac8);
}

/* windows */
.win {
  position: absolute;
  top: 46px;
  height: 1587px;
  overflow: hidden;
  border-radius: 14px 14px 18px 18px;
}
.left { left: 0; width: 1091px; box-shadow: 0 0 0 2px #05070a, 0 26px 80px 14px rgba(0,0,0,.6); }
.right { left: 1094px; width: 1091px; box-shadow: 0 0 0 2px #05070a, 0 14px 44px rgba(0,0,0,.5); }
.win::after {
  content: "";
  position: absolute;
  inset: 0;
  border-radius: inherit;
  box-shadow: inset 0 2px 0 rgba(255,255,255,.3), inset 2px 0 0 rgba(255,255,255,.12), inset -2px 0 0 rgba(255,255,255,.12), inset 0 -2px 0 rgba(255,255,255,.2);
  pointer-events: none;
}

/* browser frame */
.strip {
  height: 84px;
  padding: 16px 34px 0 26px;
  display: flex;
  align-items: center;
  background: #202124;
  color: #c4c6c9;
}
.inactive .strip { background: #3c4043; color: #b0b3b6; }
.lights { display: flex; gap: 16px; width: 130px; margin-top: -14px; }
.lights i { width: 24px; height: 24px; border-radius: 50%; background: #ee6a5f; }
.lights i:nth-child(2) { background: #e0bf4d; }
.lights i:nth-child(3) { background: #71bf48; }
.inactive .lights i { background: #5d6063; }
.tab {
  position: relative;
  width: 480px;
  height: 68px;
  padding: 0 23px 0 24px;
  display: flex;
  align-items: center;
  background: #35363a;
  border-radius: 18px 18px 0 0;
  color: #f5f6f7;
}
.inactive .tab { color: #cdcfd1; }
.tab::before, .tab::after {
  content: "";
  position: absolute;
  bottom: 0;
  width: 16px;
  height: 16px;
}
.tab::before { left: -16px; background: radial-gradient(circle at 0 0, transparent 15.500px, #35363a 16px); }
.tab::after { right: -16px; background: radial-gradient(circle at 100% 0, transparent 15.500px, #35363a 16px); }
.tab-title {
  width: 350px;
  margin: 0 16px 0 18px;
  overflow: hidden;
  white-space: nowrap;
  font-size: 24px;
  -webkit-mask-image: linear-gradient(90deg, #000 318px, transparent 352px);
  mask-image: linear-gradient(90deg, #000 318px, transparent 352px);
}
.plus { margin-left: 32px; }
.chev { margin-left: auto; }
.toolbar {
  height: 74px;
  padding: 8px 15px 8px 30px;
  display: flex;
  align-items: center;
  background: #35363a;
  border-bottom: 2px solid #5c5d61;
  color: #f1f3f4;
}
.toolbar > svg { margin-right: 36px; }
.toolbar .dim { color: #86888b; }
.inactive .toolbar { color: #85878a; }
.omni {
  width: 290px;
  height: 56px;
  margin: 0 31px 0 -5px;
  padding-left: 26px;
  display: flex;
  align-items: center;
  border-radius: 28px;
  background: #202124;
  color: #bdc1c6;
}
.omni span { width: 110px; margin-left: 24px; color: #fff; font-size: 26px; }
.omni .star { margin-left: 38px; margin-top: -2px; }
.toolbar > .puz { margin-right: 32px; }
.toolbar > .queue { margin-right: 17px; }
.pill {
  flex: none;
  width: 176px;
  height: 56px;
  display: flex;
  align-items: center;
  border-radius: 28px;
  border: 2px solid #8ab4f8;
  font-size: 24px;
  letter-spacing: .5px;
}
.paused { padding-left: 4px; margin-right: 8px; background: #2d303b; color: #8fb4f8; }
.paused b {
  width: 44px;
  height: 44px;
  margin-right: 17px;
  display: grid;
  place-items: center;
  border-radius: 50%;
  background: #40692a;
  color: #fff;
  font-weight: 400;
  font-size: 23px;
}
.update { padding: 0 23px 0 25px; justify-content: space-between; border-color: #fdd663; background: #35332e; color: #fdd663; }
.inactive .pill span { color: #8b8d90; }
.update i {
  width: 6px;
  height: 28px;
  background: radial-gradient(circle, #fdd663 2.900px, transparent 3.300px) 0 -1px / 6px 10px;
}

/* web page */
.page {
  height: 1429px;
  overflow: hidden;
  background: linear-gradient(transparent 1370px, #f4f4f4) #fff;
  color: #808080;
  font-family: "DejaVu Sans", Verdana, sans-serif;
  font-size: 26px;
  line-height: 32px;
  text-align: center;
  white-space: nowrap;
}
.site-head {
  height: 86px;
  padding: 20px 26px 0 22px;
  display: flex;
  align-items: flex-start;
  background: linear-gradient(#ededed 52px, #dcdcdc 66px, #b4b4b4 76px, #707070);
}
.logo { margin-top: 3px; }
.logo-text { font: bold 25px "Liberation Mono", monospace; fill: #8fc0ee; }
.logo-shade { fill: #5c6670; }
.logo-reflect { opacity: .35; }
.query {
  flex: none;
  width: 344px;
  height: 42px;
  margin-left: 30px;
  padding: 0 7px;
  overflow: hidden;
  border: 2px solid #767676;
  border-radius: 4px;
  background: #fff;
  color: #757575;
  font-size: 25.100px;
  line-height: 38px;
  text-align: left;
}
.go {
  flex: none;
  width: 116px;
  height: 42px;
  border: 2px solid #767676;
  border-radius: 5px;
  background: #efefef;
  color: #000;
  font-size: 24.600px;
  line-height: 38px;
}
.powered { margin-left: 84px; font-size: 18.300px; line-height: 26px; }
.air { margin: 1px 6px 0 9px; }
.air-name { color: #3068c8; font-weight: 700; font-size: 26px; line-height: 28px; letter-spacing: .6px; }
.intro { padding-top: 21px; letter-spacing: -.05px; }
.intro .l2 { letter-spacing: -.25px; }
.page hr { height: 2px; margin: 29px 10px 0; border: 0; background: #ccc; }
.page h2 { margin-top: 20px; font-size: 34px; line-height: 40px; letter-spacing: -.13px; }
.page h2.tight { letter-spacing: -.24px; }
.page h1 { margin-top: 11px; font-size: 36px; line-height: 40px; letter-spacing: -.16px; }
.box {
  width: 1052px;
  height: 260px;
  margin: 36px auto 0;
  padding-top: 28px;
  border: 2px solid #ccc;
}
.box + .box { margin-top: 26px; }
.box p { margin-top: 37px; }
.box + .box p { margin-top: 36px; }
.box + .failed {
  width: 488px;
  height: 102px;
  padding: 0 0 2px;
  display: flex;
  justify-content: center;
  align-items: center;
}
.failed span { margin: 0 10px 0 13px; }
.failed svg { margin-bottom: 8px; }
small { font-size: 19px; letter-spacing: -.3px; padding-top: 3px; }
.card {
  width: 680px;
  height: 128px;
  margin: 0 auto;
  padding: 8px;
  border-radius: 14px;
  background: linear-gradient(#fff, #f0f0f0 64px, #e0e0e0 64px, #f0f0f0);
  box-shadow: 0 0 16px rgba(0,0,0,.42);
}
.lcd {
  height: 46px;
  border: 2px solid;
  border-color: #2c2c30 #777 #777 #2c2c30;
  border-radius: 7px;
  background: #0f2935;
}
.lcd text {
  font: 26px "DejaVu Sans", sans-serif;
  fill: #60e878;
  filter: drop-shadow(0 0 5px #2fb84c);
}
.where { display: flex; padding: 9px 0 0 2px; color: #444; letter-spacing: .06px; }
.where span { flex: 1; padding-right: 8px; }
.box + .box .where, .cards .where { padding-top: 8px; }
.stats { margin-top: 24px; display: flex; justify-content: center; gap: 24px; }
.stat {
  height: 62px;
  padding-top: 3px;
  display: flex;
  justify-content: center;
  align-items: center;
  border: 2px solid #ccc;
  color: #000;
  letter-spacing: -.1px;
}
.stat svg { margin: 0 12px 8px 10px; }
.stat small { margin-left: 10px; color: #808080; letter-spacing: -.3px; }
.s442 { width: 442px; }
.s342 { width: 342px; }
.s330 { width: 330px; }
.page hr.after-stats { margin-top: 23px; }
.left hr.after-stats { margin-top: 22px; }
.rtc { margin-top: 45px; }
.rtc a { color: #0000ee; letter-spacing: -.16px; }
.page hr.full { margin: 19px 0 0; }
.cards { margin-top: 34px; display: grid; gap: 30px; }

/* WireGuard window */
.wg {
  left: 2100px;
  width: 780px;
  padding: 0 40px 0 100px;
  background: #2b2c30;
  color: #dededf;
  border-radius: 14px;
  box-shadow: 0 0 0 2px #05070a, 0 20px 40px rgba(0,0,0,.5);
}
.wg-title {
  height: 44px;
  margin: 0 -40px 0 -100px;
  padding-left: 63px;
  border-bottom: 2px solid #0a0a0c;
  background: #2a2b2e;
  color: #6d6e71;
  font-size: 26px;
  line-height: 46px;
  letter-spacing: -.37px;
}
.wg-group {
  height: 1400px;
  margin-top: 40px;
  display: grid;
  grid-template-columns: 296px 1fr;
  grid-template-rows: 50px;
  grid-auto-rows: 52px;
  column-gap: 18px;
  align-content: start;
  align-items: center;
  border: 2px solid #414247;
  border-radius: 8px;
  background: #333438;
  font-size: 24px;
  white-space: nowrap;
}
.wg-group b, .wg-group label { text-align: right; font-size: 25.600px; }
.wg-group b { letter-spacing: .3px; }
.wg-group .tight { letter-spacing: -.2px; }
.wg-group .wide { letter-spacing: .5px; }
.wg-status { display: flex; align-items: center; gap: 11px; }
.wg-status i { width: 20px; height: 20px; margin-left: 2px; border-radius: 50%; background: #62c554; }
.mac-btn {
  display: block;
  height: 38px;
  padding: 0;
  border: 0;
  border-radius: 7px;
  background: #656669;
  box-shadow: inset 0 1px 0 #88898c;
  color: #e6e6e7;
  font: 24px Inter, sans-serif;
}
.deact { width: 196px; margin: -2px 0 0 -2px; }
.wg-foot { display: flex; justify-content: flex-end; padding-top: 24px; }
.edit { width: 96px; margin-right: 2px; }

/* dock */
.dock {
  position: absolute;
  left: 87px;
  top: 1670px;
  width: 2706px;
  height: 134px;
  padding-left: 4px;
  display: flex;
  border: 2px solid #4254a4;
  border-radius: 10px 10px 0 0;
  background: linear-gradient(#1f3080, #203791);
  box-shadow: 0 0 0 2px #0b1338;
}
.app { width: 105.850px; height: 130px; margin-top: -2px; }
.drag { color: #fff; }
.sep { flex: none; width: 2px; height: 94px; margin: 14px 21px 0 23px; background: #5f72c4; }
.run { fill: #a3b5ff; }
.badge { fill: #e8493f; opacity: .93; }
.badge-t { font: 22px Inter, sans-serif; fill: #fff; text-anchor: middle; }
.small-t { font: 12px Inter, sans-serif; fill: #333; text-anchor: middle; }
.hand text { font: italic 11px "Liberation Sans", sans-serif; fill: #555; }
.hand .redhand, .redhand { fill: #c8322a; }
.tiny { font: 5px "Liberation Sans", sans-serif; fill: #2f7de0; text-anchor: middle; }
.tiny.redhand { font-size: 7px; fill: #9c2a2a; }
.tiny.teal { fill: #3fa8b8; }
```
